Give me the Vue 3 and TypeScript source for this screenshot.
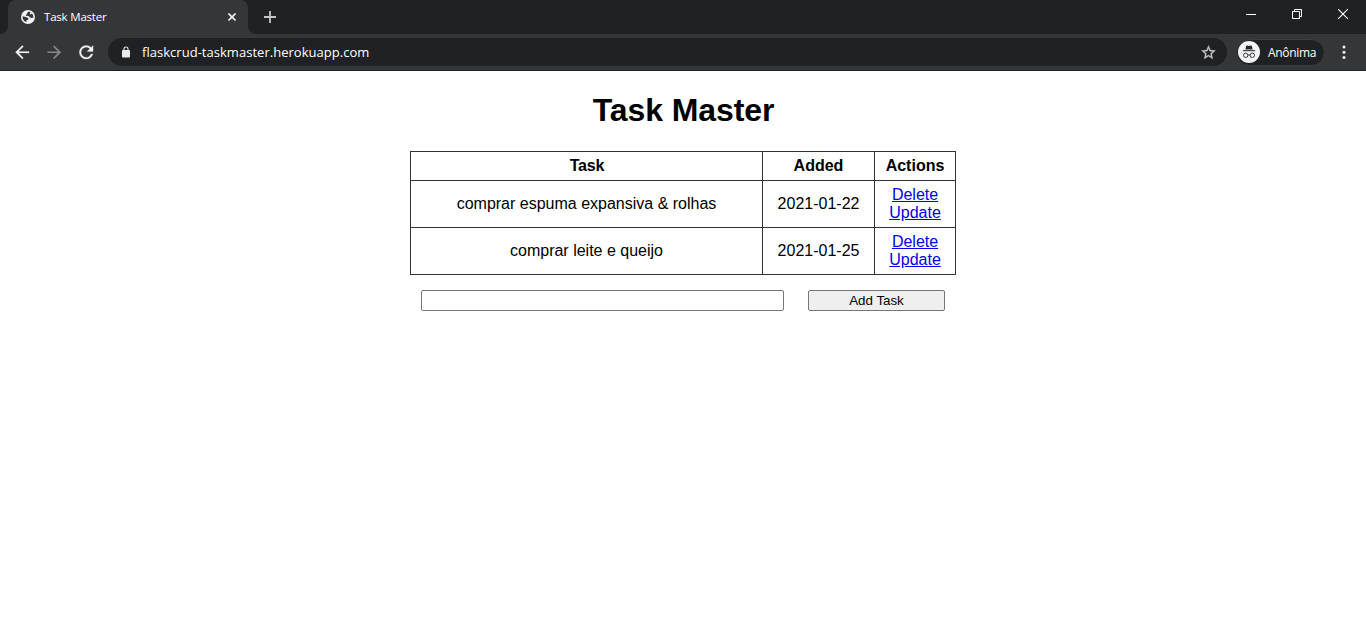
<script setup lang="ts">
import { ref } from 'vue'

interface Task {
  id: number
  content: string
  added: string
}

const tasks = ref<Task[]>([
  { id: 1, content: 'comprar espuma expansiva & rolhas', added: '2021-01-22' },
  { id: 2, content: 'comprar leite e queijo', added: '2021-01-25' },
])
const draft = ref('')
</script>

<template>
  <div class="window">
    <header class="browser">
      <div class="tabstrip">
        <div class="tab">
          <svg class="globe" width="14" height="14" viewBox="0 0 14 14">
            <circle cx="7" cy="7" r="7" fill="#f1f3f4" />
            <path d="M8 1.5 C6.5 2 5.9 2.9 6.2 4 L4.8 4.7 L5 5.8 L7.6 6 L9 7.6 L10.4 8 L12.4 7.4 C12.5 6 12 4.6 11 3.5 L9.6 4.4 L8.6 4 L9.6 2.6 Z M1.6 6.2 L4.8 6.9 L7.4 8.1 L7.2 9.6 L5.6 10.2 L5.4 12.1 C2.8 11.3 1.3 9 1.6 6.2 Z" fill="#35363a" />
          </svg>
          <span class="tab-title">Task Master</span>
          <svg class="tab-close" width="8" height="8" viewBox="0 0 8 8"><path d="M.5 .5 7.5 7.5M7.5 .5 .5 7.5" stroke="#f1f3f4" stroke-width="1.6" /></svg>
          <svg class="tab-foot" width="8" height="8" viewBox="0 0 8 8"><path d="M0 0A8 8 0 0 0 8 8H0Z" fill="#35363a" /></svg>
          <svg class="tab-foot left" width="8" height="8" viewBox="0 0 8 8"><path d="M8 0A8 8 0 0 1 0 8H8Z" fill="#35363a" /></svg>
        </div>
        <svg class="new-tab" width="12" height="12" viewBox="0 0 12 12"><path d="M6 0V12M0 6H12" stroke="#c4c6c8" stroke-width="1.8" /></svg>
        <div class="controls">
          <svg width="10" height="10" viewBox="0 0 10 10"><path d="M0 5.5H10" stroke="#fff" /></svg>
          <svg width="10" height="10" viewBox="0 0 10 10"><path d="M.5 2.5H7.5V9.5H.5ZM2.5 2.5V.5H9.5V7.5H7.5" fill="none" stroke="#fff" /></svg>
          <svg width="10" height="10" viewBox="0 0 10 10"><path d="M0 0 10 10M10 0 0 10" stroke="#fff" stroke-width="1.1" /></svg>
        </div>
      </div>

      <div class="toolbar">
        <svg class="nav" viewBox="0 0 24 24"><path d="M20 11H7.83l5.59-5.59L12 4l-8 8 8 8 1.41-1.41L7.83 13H20z" fill="#f1f3f4" stroke="#f1f3f4" stroke-width=".2" /></svg>
        <svg class="nav" viewBox="0 0 24 24"><path d="M12 4l-1.41 1.41L16.17 11H4v2h12.17l-5.58 5.59L12 20l8-8z" fill="#87888b" /></svg>
        <svg class="nav" viewBox="0 0 24 24"><path d="M17.65 6.35C16.2 4.9 14.21 4 12 4c-4.42 0-7.99 3.58-7.99 8s3.57 8 7.99 8c3.73 0 6.84-2.55 7.73-6h-2.08c-.82 2.33-3.04 4-5.65 4-3.31 0-6-2.69-6-6s2.69-6 6-6c1.66 0 3.14.69 4.22 1.78L13 11h7V4z" fill="#f1f3f4" stroke="#f1f3f4" stroke-width=".3" /></svg>
        <div class="address">
          <svg class="lock" width="8" height="12" viewBox="0 0 8 12"><path d="M2 5V3A2 2 0 0 1 6 3V5" fill="none" stroke="#e8eaed" stroke-width="1.1" /><rect y="4" width="8" height="7.6" rx="1" fill="#e8eaed" /></svg>
          <span class="url">flaskcrud-taskmaster.herokuapp.com</span>
          <svg class="star" width="17" height="17" viewBox="0 0 24 24"><path d="M22 9.24l-7.19-.62L12 2 9.19 8.63 2 9.24l5.46 4.73L5.82 21 12 17.27 18.18 21l-1.63-7.03L22 9.24zM12 15.4l-3.76 2.27 1-4.28-3.32-2.88 4.38-.38L12 6.1l1.71 4.04 4.38.38-3.32 2.88 1 4.28L12 15.4z" fill="#c4c7c9" stroke="#c4c7c9" stroke-width=".4" /></svg>
        </div>
        <div class="profile">
          <svg width="22" height="22" viewBox="0 0 22 22">
            <circle cx="11" cy="11" r="11" fill="#f1f3f4" />
            <path d="M7.3 8.4 8.2 5Q8.5 4.2 9.3 4.5L11 5 12.7 4.5Q13.5 4.2 13.8 5L14.7 8.4Z" fill="#27282b" />
            <path d="M4.8 9.7H17.2" stroke="#27282b" stroke-width="1" />
            <g fill="none" stroke="#27282b" stroke-width=".9"><circle cx="7.7" cy="14.3" r="2.2" /><circle cx="14.3" cy="14.3" r="2.2" /><path d="M9.9 14.2Q11 13.5 12.1 14.2" /></g>
          </svg>
          <span>Anônima</span>
        </div>
        <svg class="menu" width="4" height="14" viewBox="0 0 4 14" fill="#f1f3f4"><circle cx="2" cy="2" r="1.5" /><circle cx="2" cy="7.2" r="1.5" /><circle cx="2" cy="12.4" r="1.5" /></svg>
      </div>
    </header>

    <main class="content">
      <h1>Task Master</h1>
      <table>
        <colgroup><col class="c-task" /><col class="c-added" /><col class="c-actions" /></colgroup>
        <thead>
          <tr><th>Task</th><th>Added</th><th>Actions</th></tr>
        </thead>
        <tbody>
          <tr v-for="task in tasks" :key="task.id">
            <td>{{ task.content }}</td>
            <td>{{ task.added }}</td>
            <td><a href="#">Delete</a><br /><a href="#">Update</a></td>
          </tr>
        </tbody>
      </table>
      <form class="add" @submit.prevent>
        <input v-model="draft" type="text" />
        <button type="submit">Add Task</button>
      </form>
    </main>
  </div>
</template>

<style>
html, body { margin: 0; background: #fff; }
</style>

<style scoped>
.window { height: 639px; overflow: hidden; background: #fff; font-family: "Liberation Sans", Arial, sans-serif; }
.browser { font-family: "Open Sans", "Noto Sans", sans-serif; color: #fff; }
svg { display: block; flex: none; }
.tabstrip { height: 34px; background: #202124; display: flex; padding-left: 8px; }
.tab { position: relative; box-sizing: border-box; width: 240px; height: 34px; background: #35363a; border-radius: 8px 8px 0 0; display: flex; align-items: center; padding: 0 12px 0 13px; }
.tab-title { margin-left: 9px; font-size: 11.5px; line-height: 16px; letter-spacing: -.2px; flex: 1; white-space: nowrap; }
.tab-foot { position: absolute; bottom: 0; left: 100%; }
.tab-foot.left { left: -8px; }
.new-tab { margin: 11px 0 0 16px; }
.controls { margin-left: auto; display: flex; gap: 36px; padding: 9px 18px 0 0; }
.toolbar { box-sizing: border-box; height: 37px; background: #35363a; border-bottom: 1px solid #202124; display: flex; align-items: center; padding-left: 11.5px; }
.nav { width: 20.5px; height: 20.5px; margin-right: 11.5px; }
.address { box-sizing: border-box; width: 1119px; height: 28px; border-radius: 14px; background: #202124; display: flex; align-items: center; padding: 0 10px 0 14px; margin-left: .5px; }
.url { flex: 1; margin-left: 12px; font-size: 13px; line-height: 18px; letter-spacing: .03px; white-space: nowrap; }
.profile { box-sizing: border-box; width: 89px; height: 27px; margin-left: 9px; border: 1px solid #3c3d41; border-radius: 14px; background: #202124; display: flex; align-items: center; padding-left: 1px; font-size: 12px; letter-spacing: -.3px; white-space: nowrap; }
.profile span { margin-left: 8px; }
.menu { margin-left: 17px; }
.content { display: flex; flex-direction: column; align-items: center; color: #000; }
h1 { margin: 20px 0 22px; padding-left: 1px; font-size: 32px; line-height: 38px; font-weight: 700; letter-spacing: -.1px; }
table { width: 546px; table-layout: fixed; border-collapse: collapse; font-size: 16px; line-height: 18px; text-align: center; }
.c-task { width: 352px; }
.c-added { width: 112px; }
.c-actions { width: 81px; }
th, td { border: 1px solid #333; padding: 0; box-sizing: border-box; }
th { height: 29px; }
th:first-child { padding-left: 1px; letter-spacing: -.15px; }
td { height: 47px; }
a { color: #0000ee; }
.add { width: 524px; margin-top: 15px; display: flex; justify-content: space-between; }
.add input, .add button { box-sizing: border-box; height: 21px; margin: 0; border: 1px solid #767676; border-radius: 2px; font-family: inherit; font-size: 13.333px; }
.add input { width: 363px; background: #fff; padding: 1px 2px; }
.add button { width: 137px; background: #efefef; color: #000; padding: 0; line-height: 18px; }
</style>
